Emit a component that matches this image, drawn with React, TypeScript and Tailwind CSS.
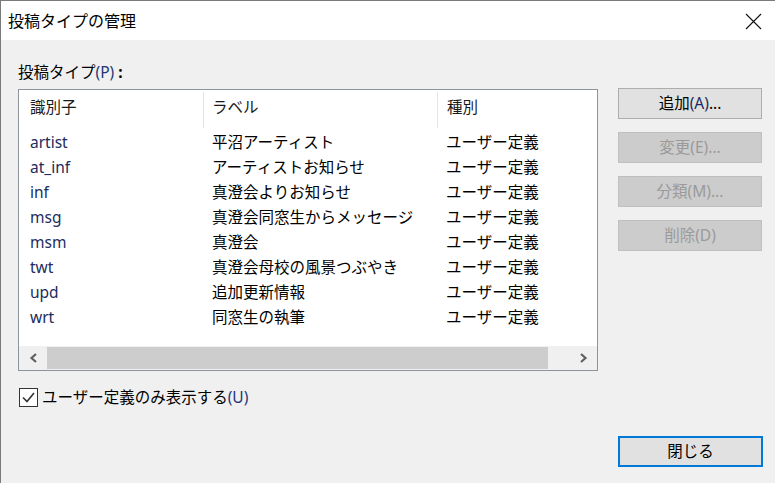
import React from 'react';

type Row = { id: string; label: string; kind: string };

const rows: Row[] = [
  { id: 'artist', label: '平沼アーティスト', kind: 'ユーザー定義' },
  { id: 'at_inf', label: 'アーティストお知らせ', kind: 'ユーザー定義' },
  { id: 'inf', label: '真澄会よりお知らせ', kind: 'ユーザー定義' },
  { id: 'msg', label: '真澄会同窓生からメッセージ', kind: 'ユーザー定義' },
  { id: 'msm', label: '真澄会', kind: 'ユーザー定義' },
  { id: 'twt', label: '真澄会母校の風景つぶやき', kind: 'ユーザー定義' },
  { id: 'upd', label: '追加更新情報', kind: 'ユーザー定義' },
  { id: 'wrt', label: '同窓生の執筆', kind: 'ユーザー定義' },
];

const SideButton: React.FC<{ label: string; mn: string; enabled?: boolean }> = ({ label, mn, enabled }) => (
  <div
    className={`w-[144px] h-[31px] flex items-center justify-center border text-[15.5px] ${
      enabled
        ? 'bg-[#e1e1e1] border-[#adadad] text-black'
        : 'bg-[#cccccc] border-[#bfbfbf] text-[#9a9a9a]'
    }`}
  >
    <span>{label}</span>
    <span className={enabled ? 'text-[#1c2a5c]' : ''}>{mn}</span>
    <span>...</span>
  </div>
);

const App: React.FC = () => {
  return (
    <div
      className="w-[775px] h-[483px] overflow-hidden bg-[#f0f0f0] border-t border-l border-[#7a7a7a] flex flex-col text-black"
      style={{ fontFamily: '"Noto Sans", "Noto Sans CJK JP", sans-serif' }}
    >
      {/* title bar */}
      <div className="h-[39px] bg-white flex items-center justify-between pl-[7px] pr-[13px] shrink-0">
        <span className="text-[16px] leading-none">投稿タイプの管理</span>
        <svg width="17" height="17" viewBox="0 0 17 17" className="mt-[1px]">
          <path d="M1 1 L16 16 M16 1 L1 16" stroke="#111" strokeWidth="1.1" />
        </svg>
      </div>

      {/* body */}
      <div className="flex-1 pl-[17px] pt-[23px] flex flex-col">
        <div className="h-[20px] flex items-center text-[15.5px] leading-none">
          <span>投稿タイプ</span>
          <span className="text-[#24367a]">(P)</span>
          <span className="ml-[4px] font-bold">:</span>
        </div>

        <div className="flex mt-[6px]">
          {/* list view */}
          <div className="w-[580px] h-[282px] border border-[#8e949c] bg-white flex flex-col overflow-hidden">
            <div className="h-[40px] flex text-[15.5px] text-[#1a1a1a] shrink-0">
              <div className="w-[184px] pl-[11px] pt-[7px] leading-[20px]">識別子</div>
              <div className="w-px h-[36px] mt-[2px] bg-[#e5e5e5]" />
              <div className="w-[233px] pl-[8px] pt-[7px] leading-[20px]">ラベル</div>
              <div className="w-px h-[36px] mt-[2px] bg-[#e5e5e5]" />
              <div className="flex-1 pl-[9px] pt-[7px] leading-[20px]">種別</div>
            </div>
            {rows.map((r) => (
              <div key={r.id} className="h-[25px] flex items-center text-[15.5px] whitespace-nowrap shrink-0">
                <div className="w-[184px] pl-[11px] text-[#222b5e]">{r.id}</div>
                <div className="w-[234px] pl-[9px]">{r.label}</div>
                <div className="flex-1 pl-[9px]">{r.kind}</div>
              </div>
            ))}
            <div className="flex-1" />
            {/* horizontal scrollbar */}
            <div className="h-[24px] bg-[#f0f0f0] flex items-stretch shrink-0">
              <div className="w-[28px] flex items-center justify-center">
                <svg width="9" height="10" viewBox="0 0 9 10">
                  <path d="M7 1 L2.5 5 L7 9" fill="none" stroke="#606060" strokeWidth="2.2" />
                </svg>
              </div>
              <div className="w-[501px] my-[1px] bg-[#cdcdcd]" />
              <div className="flex-1" />
              <div className="w-[27px] flex items-center justify-center">
                <svg width="9" height="10" viewBox="0 0 9 10">
                  <path d="M2 1 L6.5 5 L2 9" fill="none" stroke="#606060" strokeWidth="2.2" />
                </svg>
              </div>
            </div>
          </div>

          {/* side buttons */}
          <div className="ml-[20px] -mt-[1px] flex flex-col gap-[13px]">
            <SideButton label="追加" mn="(A)" enabled />
            <SideButton label="変更" mn="(E)" />
            <SideButton label="分類" mn="(M)" />
            <div className="w-[144px] h-[31px] flex items-center justify-center border bg-[#cccccc] border-[#bfbfbf] text-[#9a9a9a] text-[15.5px]">
              削除(D)
            </div>
          </div>
        </div>

        {/* checkbox */}
        <div className="flex items-center mt-[17px] h-[19px]">
          <div className="w-[19px] h-[19px] border border-[#333333] bg-white flex items-center justify-center ml-[1px]">
            <svg width="15" height="15" viewBox="0 0 15 15">
              <path d="M2 7.5 L6 11.5 L13 3" fill="none" stroke="#333333" strokeWidth="1.6" />
            </svg>
          </div>
          <span className="ml-[4px] text-[15.5px] leading-none">ユーザー定義のみ表示する</span>
          <span className="text-[15.5px] leading-none text-[#24367a]">(U)</span>
        </div>

        {/* close */}
        <div className="flex justify-end pr-[12px] mt-[29px]">
          <div className="w-[145px] h-[31px] bg-[#e1e1e1] border-2 border-[#0078d7] flex items-center justify-center text-[15.5px]">
            閉じる
          </div>
        </div>
      </div>
    </div>
  );
};

export default App;
